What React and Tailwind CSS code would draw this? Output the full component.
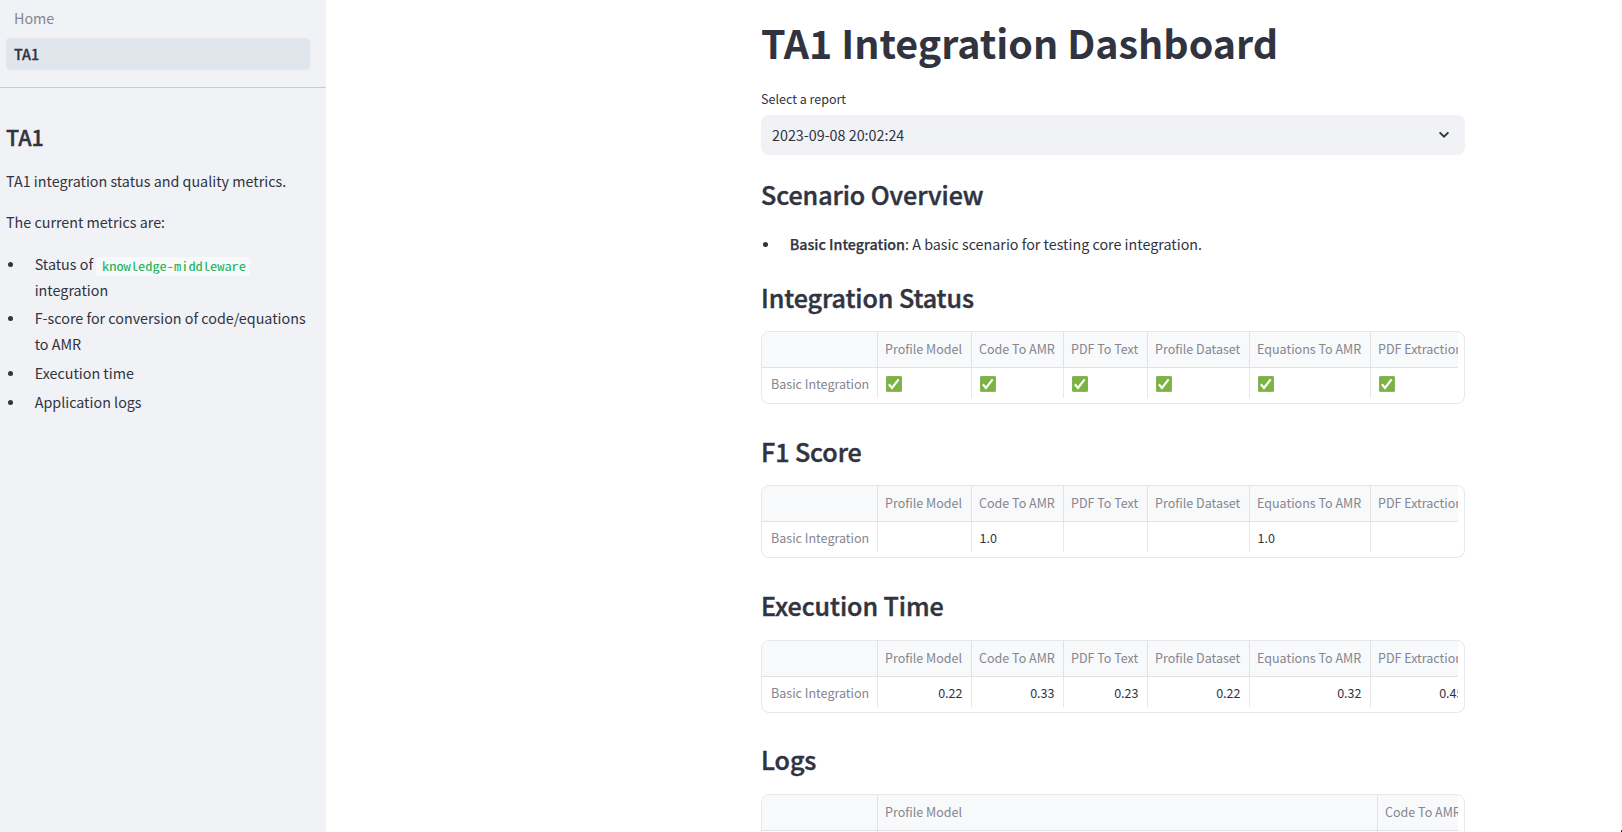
const COLS = [
  ['Profile Model', 'w-[94px]'],
  ['Code To AMR', 'w-[92px]'],
  ['PDF To Text', 'w-[84px]'],
  ['Profile Dataset', 'w-[102px]'],
  ['Equations To AMR', 'w-[121px]'],
  ['PDF Extraction', 'w-[102px]'],
];

const LOG_COLS = [
  ['Profile Model', 'w-[500px]'],
  ['Code To AMR', 'w-[92px]'],
];

function Check() {
  return (
    <svg width="16" height="16" viewBox="0 0 16 16" className="ml-[0.9px] block">
      <rect x="0.2" y="0.2" width="15.6" height="15.6" rx="0.8" fill="#689f38" />
      <rect x="0.7" y="0.5" width="14.4" height="14.4" rx="0.6" fill="#7cb342" />
      <path d="M2.9 8.2 L6 12 L12.6 3.4" fill="none" stroke="#fff" strokeWidth="2.2" />
    </svg>
  );
}

function Table({ cols = COLS, cells = [], align = 'text-left' }) {
  return (
    <div className="h-[73px] w-[704px] shrink-0 overflow-hidden rounded-lg border border-[#e6e7ea] text-[12.53px]">
      <div className="w-[696px] overflow-hidden">
        <div className="flex h-9 w-max border-b border-[#e1e2e6] bg-[#f8f9fb] text-[#85868f]">
          <div className="w-[116px] border-r border-[#e1e2e6]" />
          {cols.map(([name, w]) => (
            <div key={name} className={`${w} whitespace-nowrap border-r border-[#e1e2e6] pl-[7px] leading-[33px]`}>
              {name}
            </div>
          ))}
        </div>
        <div className="flex h-[30px] w-max text-[#31333f]">
          <div className="w-[116px] whitespace-nowrap border-r border-[#e6e7ea] pl-[9px] leading-[31px] text-[#85868f]">
            Basic Integration
          </div>
          {cols.map(([name, w], i) => (
            <div key={name} className={`${w} border-r border-[#e6e7ea] pl-[7.5px] pr-[8.5px] leading-[31px] ${align}`}>
              {cells[i] === true ? <div className="pt-2"><Check /></div> : cells[i]}
            </div>
          ))}
        </div>
      </div>
    </div>
  );
}

function Heading({ children }) {
  return (
    <h2 className="whitespace-nowrap text-[25.07px] font-medium leading-[34px] tracking-[-0.06px] [-webkit-text-stroke:0.45px_#31333f]">
      {children}
    </h2>
  );
}

function Item({ children }) {
  return (
    <li className="mb-[3px] flex leading-[25.7px]">
      <span className="ml-[2px] mt-[11px] h-[5px] w-[5px] shrink-0 rounded-full bg-[#31333f]" />
      <span className="ml-[21.7px]">{children}</span>
    </li>
  );
}

export default function App() {
  return (
    <div className="relative flex h-[832px] w-[1622px] overflow-hidden bg-white font-['Noto_Sans_CJK_SC','Noto_Sans',sans-serif] text-[14.32px] text-[#31333f]">
      <aside className="flex w-[326px] shrink-0 flex-col bg-[#f0f2f6]">
        <nav className="flex h-[88px] flex-col border-b border-[#cacbd0] pl-[6px]">
          <a className="mt-[2px] h-8 pl-2 leading-[32px] text-[#85868f]">Home</a>
          <a className="mt-1 h-8 w-[304px] rounded bg-[#e1e6ed] pl-2 font-medium leading-[32px] [-webkit-text-stroke:0.3px_#31333f]">TA1</a>
        </nav>
        <div className="flex flex-col px-[6px]">
          <h2 className="mt-[33px] text-[21.5px] font-medium leading-[32px] [-webkit-text-stroke:0.4px_#31333f]">TA1</h2>
          <p className="mt-[15px] leading-[26px]">TA1 integration status and quality metrics.</p>
          <p className="mt-[15px] leading-[26px]">The current metrics are:</p>
          <ul className="mt-4">
            <Item>
              Status of{' '}
              <code className="-ml-[0.5px] inline-block h-[19px] w-[154px] rounded bg-[#f8f9fb] pl-[6px] align-middle font-['Noto_Sans_Mono_CJK_SC','DejaVu_Sans_Mono',monospace] text-[12px] font-light leading-[18px] text-[#21b354]">
                <span className="inline-block origin-left scale-x-[1.2]">knowledge-middleware</span>
              </code>{' '}
              integration
            </Item>
            <Item>F-score for conversion of code/equations to AMR</Item>
            <Item>Execution time</Item>
            <Item>Application logs</Item>
          </ul>
        </div>
      </aside>
      <main className="flex h-[868px] grow flex-col pl-[435px] *:shrink-0">
        <h1 className="mt-[15px] whitespace-nowrap text-[39.4px] font-bold leading-[53px]">TA1 Integration Dashboard</h1>
        <label className="mt-[21px] text-[12.53px] leading-[20px]">Select a report</label>
        <div className="mt-[6px] flex h-10 w-[704px] items-center justify-between rounded-lg bg-[#f0f2f6] pl-[11px] pr-[15px]">
          <span>2023-09-08 20:02:24</span>
          <svg width="12" height="8" viewBox="0 0 12 8">
            <path d="M1.6 1.4 L6 5.6 L10.4 1.4" fill="none" stroke="#31333f" strokeWidth="2" />
          </svg>
        </div>
        <div className="mt-[22px]"><Heading>Scenario Overview</Heading></div>
        <ul className="mt-[20px] h-[29px]">
          <Item>
            <b className="font-medium [-webkit-text-stroke:0.25px_#31333f]">Basic Integration</b>: A basic scenario for testing core integration.
          </Item>
        </ul>
        <div className="mt-[20px]"><Heading>Integration Status</Heading></div>
        <div className="mt-[17px]"><Table cells={[true, true, true, true, true, true]} /></div>
        <div className="mt-[30px]"><Heading>F1 Score</Heading></div>
        <div className="mt-[17px]"><Table cells={['', '1.0', '', '', '1.0', '']} /></div>
        <div className="mt-[30px]"><Heading>Execution Time</Heading></div>
        <div className="mt-[18px]"><Table cells={['0.22', '0.33', '0.23', '0.22', '0.32', '0.45']} align="text-right" /></div>
        <div className="mt-[29px]"><Heading>Logs</Heading></div>
        <div className="mt-[18px]"><Table cols={LOG_COLS} /></div>
      </main>
      <span className="absolute bottom-0 right-0 h-[2px] w-px bg-[#31333f]" />
    </div>
  );
}
